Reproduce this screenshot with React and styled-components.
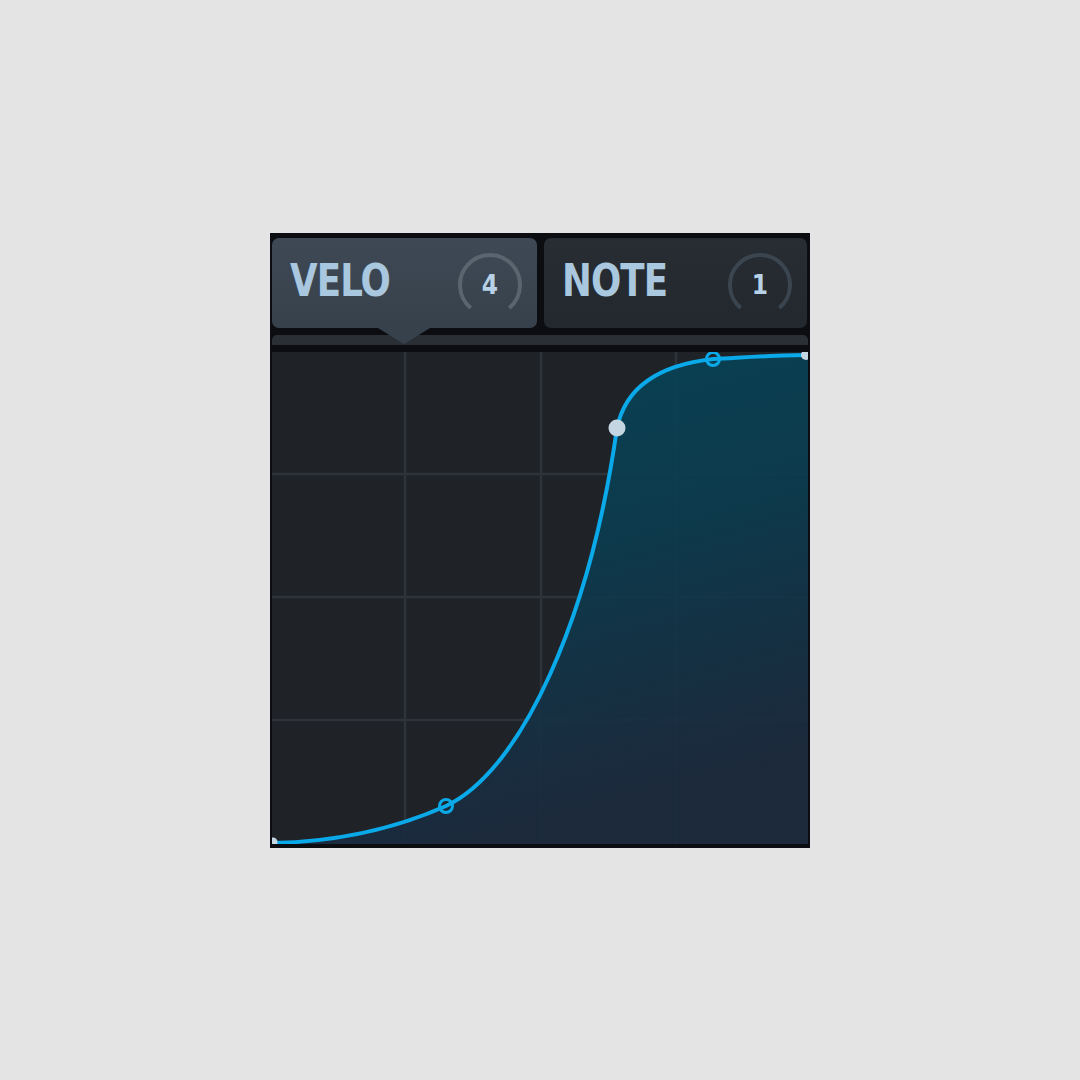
import React from "react";
import styled, { createGlobalStyle } from "styled-components";

const Global = createGlobalStyle`
  html, body { margin: 0; padding: 0; background: #e4e4e4; }
  body { font-family: "DejaVu Sans Condensed", "DejaVu Sans", sans-serif; }
`;

const Page = styled.div`
  min-height: 100vh;
  display: flex;
  align-items: center;
  justify-content: center;
`;

const Panel = styled.div`
  width: 540px;
  height: 615px;
  box-sizing: border-box;
  background: #0b0d10;
  padding: 5px 2px 4px 2px;
  display: flex;
  flex-direction: column;
`;

const TabRow = styled.div`
  display: grid;
  grid-template-columns: 265px 263px;
  gap: 7px;
  height: 90px;
  position: relative;
  z-index: 2;
`;

const Tab = styled.div`
  position: relative;
  border-radius: 7px;
  background: ${(p) =>
    p.$active
      ? "linear-gradient(180deg, #3f4955 0%, #37414c 100%)"
      : "linear-gradient(180deg, #282d34 0%, #23282e 100%)"};
  display: flex;
  align-items: center;
  justify-content: space-between;
  padding: 0 13px 0 18px;
  box-sizing: border-box;
`;

const Pointer = styled.div`
  position: absolute;
  left: 106px;
  bottom: -16px;
  width: 0;
  height: 0;
  border-left: 26px solid transparent;
  border-right: 26px solid transparent;
  border-top: 16px solid #37414c;
`;

const Label = styled.span`
  font-family: "DejaVu Sans Condensed", "DejaVu Sans", sans-serif;
  font-weight: bold;
  font-size: 45px;
  letter-spacing: -1px;
  color: #a9c7de;
  transform: scaleX(0.88);
  transform-origin: left center;
  line-height: 1;
  margin-top: -4px;
`;

const Knob = styled.div`
  position: relative;
  width: 68px;
  height: 68px;
  display: flex;
  align-items: center;
  justify-content: center;
  margin-top: 5px;
`;

const KnobArc = styled.svg`
  position: absolute;
  inset: 0;
`;

const KnobValue = styled.span`
  position: relative;
  font-family: "DejaVu Sans Condensed", "DejaVu Sans", sans-serif;
  font-weight: bold;
  font-size: 26px;
  color: #b7d2e6;
  line-height: 1;
`;

const Strip = styled.div`
  margin-top: 7px;
  height: 10px;
  background: #2a2f36;
  border-radius: 5px 5px 0 0;
`;

const Graph = styled.div`
  margin-top: 7px;
  flex: 1;
  background: #1f2227;
  position: relative;
  overflow: hidden;
`;

const GraphSvg = styled.svg`
  display: block;
  width: 100%;
  height: 100%;
`;

function KnobControl({ value, trackColor }) {
  const r = 30;
  const cx = 34;
  const cy = 34;
  const start = 130 * (Math.PI / 180);
  const end = 410 * (Math.PI / 180);
  const x1 = cx + r * Math.cos(start);
  const y1 = cy + r * Math.sin(start);
  const x2 = cx + r * Math.cos(end);
  const y2 = cy + r * Math.sin(end);
  return (
    <Knob>
      <KnobArc width="68" height="68" viewBox="0 0 68 68">
        <path
          d={`M ${x1} ${y1} A ${r} ${r} 0 1 1 ${x2} ${y2}`}
          fill="none"
          stroke={trackColor}
          strokeWidth="4"
        />
      </KnobArc>
      <KnobValue>{value}</KnobValue>
    </Knob>
  );
}

const W = 536;
const H = 492;
const curve =
  "M 0 491 C 60 490 120 478 174 454 C 250 418 318 266 345 76 C 352 42 378 14 441 7 C 480 5 510 3 536 3";

function CurveGraph() {
  const vx = [133, 269, 404];
  const hy = [122, 245, 368];
  return (
    <GraphSvg viewBox={`0 0 ${W} ${H}`} preserveAspectRatio="none">
      <defs>
        <linearGradient id="fillGrad" x1="0" y1="0" x2="0.3" y2="1">
          <stop offset="0" stopColor="#05475a" />
          <stop offset="0.5" stopColor="#0a3d50" />
          <stop offset="1" stopColor="#1b2a3e" />
        </linearGradient>
      </defs>
      {vx.map((x) => (
        <line key={"v" + x} x1={x} y1="0" x2={x} y2={H} stroke="#2e333a" strokeWidth="2.5" />
      ))}
      {hy.map((y) => (
        <line key={"h" + y} x1="0" y1={y} x2={W} y2={y} stroke="#2e333a" strokeWidth="2.5" />
      ))}
      <path d={`${curve} L 536 492 L 0 492 Z`} fill="url(#fillGrad)" opacity="0.9" />
      <path d={curve} fill="none" stroke="#0aa9ea" strokeWidth="4" strokeLinecap="round" />
      <circle cx="174" cy="454" r="6.5" fill="none" stroke="#0aa9ea" strokeWidth="3" />
      <circle cx="441" cy="7" r="6.5" fill="none" stroke="#0aa9ea" strokeWidth="3" />
      <circle cx="345" cy="76" r="8.5" fill="#c5d6e3" />
      <circle cx="534" cy="3" r="5" fill="#c5d6e3" />
      <circle cx="1" cy="490" r="4.5" fill="#c5d6e3" />
    </GraphSvg>
  );
}

export default function App() {
  return (
    <>
      <Global />
      <Page>
        <Panel>
          <TabRow>
            <Tab $active>
              <Label>VELO</Label>
              <KnobControl value="4" trackColor="#5b6570" />
              <Pointer />
            </Tab>
            <Tab>
              <Label>NOTE</Label>
              <KnobControl value="1" trackColor="#3b4550" />
            </Tab>
          </TabRow>
          <Strip />
          <Graph>
            <CurveGraph />
          </Graph>
        </Panel>
      </Page>
    </>
  );
}
